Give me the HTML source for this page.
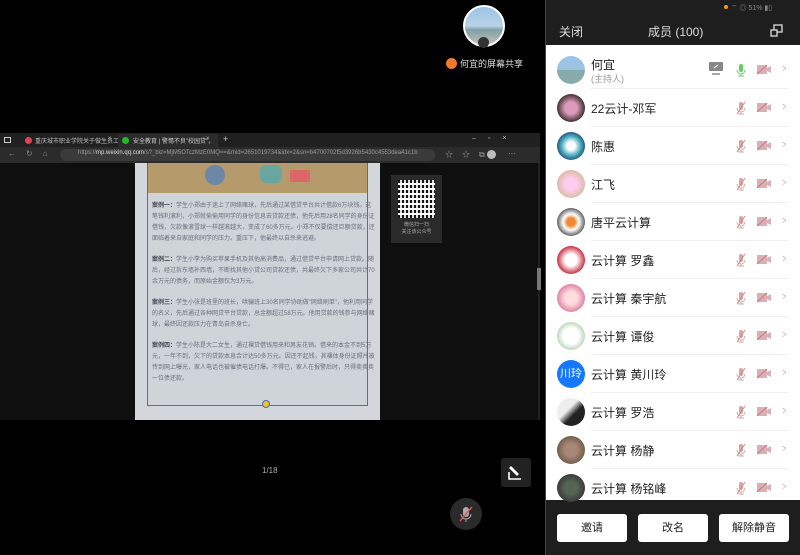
<!DOCTYPE html>
<html><head><meta charset="utf-8"><style>
*{margin:0;padding:0;box-sizing:border-box}
body{width:800px;height:555px;background:#000;position:relative;overflow:hidden;font-family:"Liberation Sans","Noto Sans CJK SC",sans-serif}
.a{position:absolute}
.row{position:absolute;left:545px;width:255px;height:38px}
.row .av{position:absolute;left:12px;top:5px;width:28px;height:28px;border-radius:50%}
.row .nm{position:absolute;left:46px;top:11px;font-size:12px;color:#222}
.row .ln{position:absolute;left:46px;right:12px;bottom:0;height:1px;background:#eee}
.mic{position:absolute;left:190px;top:12px}
.cam{position:absolute;left:212px;top:13px}
.chev{position:absolute;left:236px;top:12px;color:#bbb;font-size:11px;transform:scaleX(.7)}
.btn{position:absolute;top:514px;width:70px;height:28px;background:#fff;border-radius:3px;font-size:11px;color:#222;text-align:center;line-height:28px}
.txt{position:absolute;left:152px;width:225px;font-size:6px;line-height:11px;color:#6a7080}
</style></head><body>
<div class="a" style="left:463px;top:5px;width:42px;height:42px;border-radius:50%;border:2px solid #fff;background:linear-gradient(#9cc3e6 0%,#b9d3e6 50%,#7fa0a8 60%,#c8c2b0 100%)"></div>
<div class="a" style="left:478px;top:37px;width:11px;height:11px;border-radius:50%;background:#333"></div>
<div class="a" style="left:446px;top:58px;width:11px;height:11px;border-radius:50%;background:#f07a28"></div>
<div class="a" style="left:460px;top:57px;font-size:9px;color:#ddd">何宜的屏幕共享</div>
<div class="a" style="left:0;top:133px;width:540px;height:14px;background:#202020"></div>
<div class="a" style="left:4px;top:137px;width:7px;height:6px;border:1px solid #ccc"></div>
<div class="a" style="left:25px;top:137px;width:7px;height:7px;border-radius:50%;background:#d45"></div>
<div class="a" style="left:35px;top:136px;font-size:6px;color:#bbb">重庆城市职业学院关于做生员工</div>
<div class="a" style="left:108px;top:136px;font-size:6px;color:#bbb">×</div>
<div class="a" style="left:118px;top:134px;width:100px;height:13px;background:#2b2b2b"></div>
<div class="a" style="left:122px;top:137px;width:7px;height:7px;border-radius:50%;background:#2b2"></div>
<div class="a" style="left:133px;top:136px;font-size:6px;color:#ccc">安全教育 | 警惕不良"校园贷"，</div>
<div class="a" style="left:206px;top:136px;font-size:6px;color:#bbb">×</div>
<div class="a" style="left:223px;top:134px;font-size:9px;color:#ccc">+</div>
<div class="a" style="left:472px;top:135px;font-size:7px;color:#bbb;letter-spacing:12px">–▫×</div>
<div class="a" style="left:0;top:147px;width:540px;height:16px;background:#2b2b2b"></div>
<div class="a" style="left:8px;top:149px;font-size:8px;color:#888;letter-spacing:10px">←↻⌂</div>
<div class="a" style="left:60px;top:149px;width:375px;height:12px;border-radius:6px;background:#3a3a3a"></div>
<div class="a" style="left:78px;top:150px;font-size:6px;color:#999;white-space:nowrap">https://<span style="color:#ddd">mp.weixin.qq.com</span>/s?_biz=MjM5OTczMzE0MQ==&amp;mid=2651019734&amp;idx=2&amp;sn=b4700702f5d3926b5430c4553dea41c1b</div>
<div class="a" style="left:445px;top:149px;font-size:8px;color:#999;letter-spacing:9px">☆☆⧉</div>
<div class="a" style="left:487px;top:150px;width:9px;height:9px;border-radius:50%;background:#bbb"></div>
<div class="a" style="left:508px;top:149px;font-size:8px;color:#aaa">···</div>
<div class="a" style="left:0;top:163px;width:540px;height:257px;background:#0f0f0f"></div>
<div class="a" style="left:135px;top:163px;width:245px;height:257px;background:#d3d7db"></div>
<div class="a" style="left:147px;top:163px;width:221px;height:243px;border:1px solid #3f6fd0;background:#cfd4d8"></div>
<div class="a" style="left:148px;top:163px;width:219px;height:30px;background:#b59a6c"></div>
<div class="a" style="left:205px;top:165px;width:20px;height:20px;border-radius:50%;background:#6d87a8"></div>
<div class="a" style="left:260px;top:165px;width:22px;height:18px;border-radius:6px;background:#6aa6a0"></div>
<div class="a" style="left:290px;top:170px;width:20px;height:12px;background:#d66"></div>
<div class="txt" style="top:201px"><b style="color:#445">案例一：</b>学生小郑由于迷上了网络赌球，先后通过某借贷平台共计借款6万块钱。这笔钱利滚利，小郑就偷偷用同学的身份信息去贷款还债，他先后用28名同学的身份证借钱，欠款像滚雪球一样越滚越大，变成了60多万元。小郑不仅要偿还巨额贷款，还面临着来自家庭和同学的压力。重压下，他最终以自杀来逃避。</div>
<div class="txt" style="top:255px"><b style="color:#445">案例二：</b>学生小李为购买苹果手机及其他高消费品，通过借贷平台申请网上贷款。随后，经过拆东墙补西墙，不断找其他小贷公司贷款还债，共最终欠下多家公司共计70余万元的债务，而原始金额仅为3万元。</div>
<div class="txt" style="top:298px"><b style="color:#445">案例三：</b>学生小张是班里的班长，哄骗班上30名同学协助做"网络刷单"，他利用同学的名义，先后通过各种网贷平台贷款，总金额超过58万元。他用贷款的钱参与网络赌球，最终因还款压力在青岛自杀身亡。</div>
<div class="txt" style="top:341px"><b style="color:#445">案例四：</b>学生小陈是大二女生，通过裸贷借钱用来和男友花销。借来的本金不到5万元，一年不到，欠下的贷款本息合计达50多万元。因还不起钱，其裸体身份证照片被传到网上曝光，家人电话也被催债电话打爆。不得已，家人在报警后时，只得卖卖卖一位债还款。</div>
<div class="a" style="left:262px;top:400px;width:8px;height:8px;border-radius:50%;background:#f5c518;border:1.5px solid #3f6fd0"></div>
<div class="a" style="left:391px;top:175px;width:51px;height:68px;background:#2a2a2a"></div>
<div class="a" style="left:398px;top:180px;width:37px;height:38px;background:repeating-linear-gradient(90deg,#111 0 2px,#fff 2px 4px),#fff;opacity:.85"></div>
<div class="a" style="left:398px;top:180px;width:37px;height:38px;background:repeating-linear-gradient(0deg,transparent 0 3px,#fff 3px 5px)"></div>
<div class="a" style="left:396px;top:222px;width:41px;font-size:5px;line-height:7px;color:#aaa;text-align:center">微信扫一扫<br>关注该公众号</div>
<div class="a" style="left:538px;top:163px;width:2px;height:257px;background:#222"></div>
<div class="a" style="left:537px;top:268px;width:4px;height:22px;background:#777"></div>
<div class="a" style="left:262px;top:466px;font-size:8px;color:#aaa">1/18</div>
<div class="a" style="left:501px;top:458px;width:30px;height:29px;background:#222;border-radius:3px"></div>
<svg class="a" style="left:506px;top:463px" width="20" height="20" viewBox="0 0 20 20"><path d="M3 9V16H15" stroke="#fff" stroke-width="1.6" fill="none"/><path d="M5 3l8 8-2 2-8-8z" fill="#fff"/></svg>
<div class="a" style="left:450px;top:498px;width:32px;height:32px;border-radius:50%;background:#2a2a2a"></div>
<svg class="a" style="left:456px;top:504px" width="20" height="20" viewBox="0 0 20 20"><rect x="7" y="3" width="6" height="10" rx="3" fill="#aaa"/><path d="M5 10a5 5 0 0 0 10 0M10 15v3" stroke="#aaa" fill="none"/><path d="M4 17L16 3" stroke="#d55" stroke-width="1.4"/></svg>
<div class="a" style="left:545px;top:0;width:255px;height:555px;background:#1e1e1e"></div>
<div class="a" style="left:545px;top:0;width:1px;height:555px;background:#444"></div>
<div class="a" style="left:724px;top:5px;width:4px;height:4px;border-radius:50%;background:#f90"></div>
<div class="a" style="left:731px;top:3px;font-size:7px;color:#888">⌔ ◎ 51% ▮▯</div>
<div class="a" style="left:559px;top:23px;font-size:12px;color:#ddd">关闭</div>
<div class="a" style="left:648px;top:23px;font-size:12px;color:#ddd">成员 (100)</div>
<svg class="a" style="left:770px;top:24px" width="13" height="13" viewBox="0 0 13 13"><rect x="4" y="1" width="8" height="7" stroke="#ddd" fill="none" stroke-width="1.3"/><rect x="1" y="6" width="6" height="6" stroke="#ddd" fill="#1e1e1e" stroke-width="1.3"/></svg>
<div class="a" style="left:546px;top:45px;width:254px;height:455px;background:#fff"></div>
<div id="rows"></div>
<div class="btn" style="left:557px">邀请</div>
<div class="btn" style="left:638px">改名</div>
<div class="btn" style="left:719px">解除静音</div>
<script>
var mic='<svg class="mic" width="12" height="14" viewBox="0 0 12 14"><rect x="4" y="1" width="4" height="8" rx="2" fill="#cfa8a8"/><path d="M2 7a4 4 0 0 0 8 0M6 11v2M3 13h6" stroke="#cfa8a8" fill="none"/><path d="M2 13L10 1" stroke="#e08080"/></svg>';
var cam='<svg class="cam" width="15" height="11" viewBox="0 0 15 11"><rect x="0" y="1" width="10" height="9" fill="#d9b0b8"/><path d="M10 4l4-2v7l-4-2z" fill="#d9b0b8"/><path d="M0 10L10 1" stroke="#c77"/></svg>';
var rows=[["何宜","linear-gradient(#9cc3e6 50%,#8aa 50%)"],["22云计-邓军","radial-gradient(#d9b 30%,#433 70%)"],["陈惠","radial-gradient(#fff 20%,#4ab 50%,#236 80%)"],["江飞","radial-gradient(#fce 30%,#dba 70%)"],["唐平云计算","radial-gradient(#e83 20%,#fff 40%,#333 80%)"],["云计算  罗鑫","radial-gradient(#fff 30%,#c34 70%)"],["云计算  秦宇航","radial-gradient(#fdd 30%,#d8a 70%)"],["云计算  谭俊","radial-gradient(#fff 40%,#aca 80%)"],["云计算  黄川玲","#1677ff"],["云计算  罗浩","linear-gradient(135deg,#eee 40%,#222 60%)"],["云计算  杨静","radial-gradient(#a87 30%,#654 80%)"],["云计算  杨铭峰","radial-gradient(#565 30%,#333 80%)"]];
var h='';
rows.forEach(function(r,i){
 var top=51+i*38;
 h+='<div class="row" style="top:'+top+'px">';
 h+='<div class="av" style="background:'+r[1]+(i==8?';color:#fff;font-size:11px;text-align:center;line-height:28px">川玲':'">')+'</div>';
 if(i==0){h+='<div class="nm" style="top:5px">何宜</div><div class="a" style="left:46px;top:21px;font-size:9px;color:#999">(主持人)</div>';
  h+='<svg style="position:absolute;left:164px;top:11px" width="14" height="13" viewBox="0 0 14 13"><rect x="0" y="0" width="14" height="9" rx="1" fill="#888"/><path d="M3 12h8" stroke="#888" stroke-width="1.5"/><path d="M5 6l4-3" stroke="#fff"/></svg>';
  h+='<svg class="mic" width="12" height="14" viewBox="0 0 12 14"><rect x="4" y="1" width="4" height="8" rx="2" fill="#6c6"/><path d="M2 7a4 4 0 0 0 8 0M6 11v2M3 13h6" stroke="#6c6" fill="none"/></svg>';}
 else{h+='<div class="nm">'+r[0].replace('  ','&nbsp;')+'</div>'+mic;}
 h+=cam+'<div class="chev">&gt;</div>';
 if(i<11)h+='<div class="ln"></div>';
 h+='</div>';
});
document.getElementById('rows').innerHTML=h;
</script>
</body></html>
